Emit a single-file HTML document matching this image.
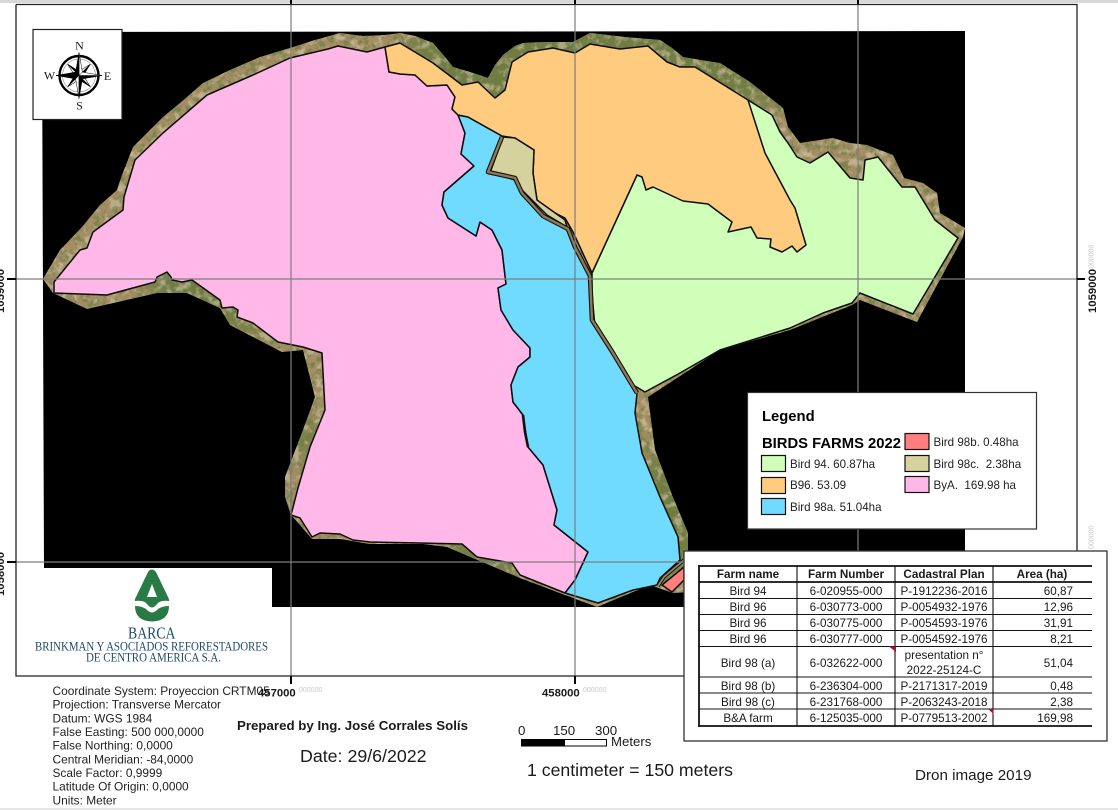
<!DOCTYPE html>
<html><head><meta charset="utf-8"><title>Birds Farms 2022</title>
<style>
html,body{margin:0;padding:0;background:#fff;width:1118px;height:810px;overflow:hidden}
svg{display:block}
text{font-family:"Liberation Sans",sans-serif;fill:#1a1a1a}
.s{font-family:"Liberation Serif",serif}
.t{font-size:11.7px;text-anchor:middle}
.r{font-size:11.7px;text-anchor:end}
.h{font-size:11.7px;font-weight:bold;text-anchor:middle}
.l{font-size:11.6px;fill:#222}
.c{font-size:11.9px;fill:#222}
.g{font-size:7px;fill:#c8c8c8}
.b{font-size:11.3px;font-weight:bold}
</style></head><body>
<svg width="1118" height="810" viewBox="0 0 1118 810" xmlns="http://www.w3.org/2000/svg">
<defs>
<clipPath id="land"><polygon points="43,279 60,250 82,227 100,205 117,190 122,175 133,147 145,135 163,117 180,103 203,83 230,70 260,57 290,48 315,40 340,33 363,36 385,35 400,33 415,36 433,43 445,57 453,67 470,72 488,78 495,65 503,55 515,46 523,43 545,42 573,42 590,33 625,37 660,40 672,48 683,57 700,60 720,63 750,82 783,108 788,127 800,143 833,138 850,143 867,145 893,155 904,178 923,183 937,193 940,213 965,228 963,237 917,322 860,300 852,305 790,330 720,350 677,378 648,397 655,450 672,495 688,533 688,552 690,592 673,593 650,585 597,607 520,578 447,547 423,544 370,544 340,539 312,539 300,525 291,515 285,497 285,477 303,430 315,397 303,350 282,352 230,325 220,308 187,293 157,293 87,309 53,293"/></clipPath>
<filter id="noise" x="0" y="0" width="100%" height="100%"><feTurbulence type="fractalNoise" baseFrequency="0.16" numOctaves="3" seed="4"/><feColorMatrix type="matrix" values="0 0 0 0 0.16  0 0 0 0 0.22  0 0 0 0 0.06  5 0 0 0 -2.3"/></filter>
<filter id="noise2" x="0" y="0" width="100%" height="100%"><feTurbulence type="fractalNoise" baseFrequency="0.12" numOctaves="3" seed="11"/><feColorMatrix type="matrix" values="0 0 0 0 0.80  0 0 0 0 0.66  0 0 0 0 0.50  0 4.500 0 0 -2.200"/></filter>
<filter id="bl" x="-30%" y="-30%" width="160%" height="160%"><feGaussianBlur stdDeviation="12"/></filter>
</defs>

<rect width="1118" height="810" fill="#fff"/>
<rect width="1118" height="3" fill="#d8d8d8"/>
<rect y="808" width="1118" height="2" fill="#e6e6e6"/>

<!-- black raster -->
<polygon points="42,32 965,31 965,607 272,607 272,568 44,568" fill="#000"/>

<!-- land -->
<g clip-path="url(#land)">
<rect x="40" y="30" width="930" height="580" fill="#a48d64"/>
<g filter="url(#bl)" fill="#6f7a42">
<rect x="410" y="15" width="370" height="90"/>
<rect x="150" y="260" width="130" height="70"/>
<ellipse cx="672" cy="510" rx="34" ry="70"/>
<rect x="450" y="530" width="120" height="50"/>
<rect x="295" y="420" width="30" height="40"/>
</g>
<rect x="40" y="30" width="930" height="580" filter="url(#noise)" opacity=".8"/>
<rect x="40" y="30" width="930" height="580" filter="url(#noise2)" opacity=".5"/>
</g>

<!-- parcels -->
<g stroke="#0d0d0d" stroke-width="1.500" stroke-linejoin="round">
<polygon fill="#CFFFB8" points="748,100 772,115 780,132 788,143 797,157 810,163 828,152 850,178 863,180 865,160 878,157 902,187 915,187 935,220 958,238 913,314 860,293 852,303 823,313 790,328 720,350 680,373 645,392 628,382 613,353 595,328 592,293 592,273 637,175 700,150"/>
<polygon fill="#FFB8E8" points="54,293 54,282 80,250 87,248 93,232 123,210 124,197 135,160 163,133 207,95 253,75 290,58 328,49 338,46 367,52 385,47 389,72 400,74 415,75 427,86 447,85 455,97 452,109 458,115 465,133 461,154 474,166 444,192 442,205 448,218 476,236 480,222 492,230 502,250 506,284 498,288 501,310 513,330 530,348 530,357 518,367 511,385 513,402 523,415 528,447 543,465 557,510 554,525 588,552 575,580 565,593 520,575 512,563 477,557 462,544 420,543 370,542 353,540 340,534 320,533 312,537 300,518 291,515 298,488 310,447 325,410 322,353 303,347 278,342 253,323 237,317 238,310 233,307 222,308 220,300 192,280 182,282 172,280 171,277 167,272 157,277 155,282 107,295"/>
<polygon fill="#70DBFF" points="458,115 468,117 502,136 488,172 515,180 522,195 543,217 568,230 575,247 590,278 593,320 613,353 637,393 635,413 642,453 660,497 678,537 680,560 660,578 657,585 633,590 598,603 565,593 575,580 588,552 554,525 557,510 543,465 528,447 523,415 513,402 511,385 518,367 530,357 530,348 513,330 501,310 498,288 506,284 502,250 492,230 480,222 476,236 448,218 442,205 444,192 474,166 461,154 465,133"/>
<polygon fill="#FFCC7F" points="385,47 400,43 433,63 462,85 478,82 495,98 505,90 512,62 528,52 553,48 575,53 590,44 620,49 648,46 667,62 680,67 695,67 748,100 765,153 790,200 795,208 806,245 797,252 792,246 782,252 770,247 771,239 757,238 751,227 728,232 732,222 708,204 683,201 653,187 646,190 642,177 637,175 592,273 573,232 565,218 543,207 537,200 533,173 534,150 515,138 502,136 468,117 458,115 452,109 455,97 447,85 427,86 415,75 400,74 389,72"/>
<polygon fill="#D6D29E" points="503,137 515,138 534,150 533,173 537,200 565,220 567,227 547,215 520,188 513,177 490,173"/>
<polygon fill="#FF7F7F" points="684,567 662,585 672,592 684,580"/>
</g>
<polyline fill="none" stroke="#111" stroke-width="4.600" stroke-linejoin="round" points="502,137 488,172 515,178 522,193 543,216 568,229 575,247 590,276 592,320 613,353 637,393"/>
<polyline fill="none" stroke="#8e7a56" stroke-width="2.400" stroke-linejoin="round" points="502,137 488,172 515,178 522,193 543,216 568,229 575,247 590,276 592,320 613,353 637,393"/>
<polyline fill="none" stroke="#111" stroke-width="3.600" points="684,560 664,577 658,586"/>
<polyline fill="none" stroke="#8e8a5c" stroke-width="1.800" points="684,560 664,577 658,586"/>
<polyline fill="none" stroke="#111" stroke-width="2.600" points="523,415 525,432 528,447"/>

<!-- grid + frame -->
<g stroke="#7d7d7d" stroke-width="1.200" fill="none">
<path d="M291 4V676M575 4V676M858 4V551M16 279H1077M16 562H684"/>
</g>
<path d="M16 4.500H1077V551M16 4.500V676H684" fill="none" stroke="#222" stroke-width="1.300"/>
<path d="M291 0V4M575 0V4M858 0V4M291 676V684M575 676V684M7 279H16M7 562H16M1077 279H1085" stroke="#000" stroke-width="2" fill="none"/>

<!-- coordinate block -->
<text class="c" x="52.500" y="695">Coordinate System: Proyeccion CRTM05</text>
<text class="c" x="52.500" y="708.700">Projection: Transverse Mercator</text>
<text class="c" x="52.500" y="722.300">Datum: WGS 1984</text>
<text class="c" x="52.500" y="736">False Easting: 500 000,0000</text>
<text class="c" x="52.500" y="749.700">False Northing: 0,0000</text>
<text class="c" x="52.500" y="763.300">Central Meridian: -84,0000</text>
<text class="c" x="52.500" y="777">Scale Factor: 0,9999</text>
<text class="c" x="52.500" y="790.700">Latitude Of Origin: 0,0000</text>
<text class="c" x="52.500" y="804.400">Units: Meter</text>

<!-- axis labels -->
<text class="b" x="258" y="696.500">457000</text>
<text class="g" x="299" y="692">000000</text>
<text class="b" x="542" y="696.500">458000</text>
<text class="g" x="583" y="692">000000</text>
<text class="b" transform="translate(4,313) rotate(-90)">1059000</text>
<text class="b" transform="translate(4,596) rotate(-90)">1058000</text>
<text class="b" transform="translate(1096,313) rotate(-90)">1059000</text>
<text class="g" transform="translate(1093.500,268) rotate(-90)">000000</text>
<text class="g" transform="translate(1093.500,549) rotate(-90)">000000</text>

<!-- compass -->
<rect x="33" y="29.500" width="89" height="90" fill="#fff" stroke="#222" stroke-width="1.200"/>
<g transform="translate(79,75.500)">
<circle r="19.500" fill="none" stroke="#000" stroke-width="2.400"/>
<circle r="16.500" fill="none" stroke="#666" stroke-width=".5"/>
<g stroke="#000" stroke-width=".5">
<g transform="rotate(45)"><polygon points="0,-16 3,-3 0,0" fill="#000"/><polygon points="0,-16 -3,-3 0,0" fill="#fff"/></g>
<g transform="rotate(135)"><polygon points="0,-16 3,-3 0,0" fill="#000"/><polygon points="0,-16 -3,-3 0,0" fill="#fff"/></g>
<g transform="rotate(225)"><polygon points="0,-16 3,-3 0,0" fill="#000"/><polygon points="0,-16 -3,-3 0,0" fill="#fff"/></g>
<g transform="rotate(315)"><polygon points="0,-16 3,-3 0,0" fill="#000"/><polygon points="0,-16 -3,-3 0,0" fill="#fff"/></g>
<g transform="rotate(0)"><polygon points="0,-23 3.400,-3.400 0,0" fill="#fff"/><polygon points="0,-23 -3.400,-3.400 0,0" fill="#000"/></g>
<g transform="rotate(90)"><polygon points="0,-23 3.400,-3.400 0,0" fill="#000"/><polygon points="0,-23 -3.400,-3.400 0,0" fill="#fff"/></g>
<g transform="rotate(180)"><polygon points="0,-23 3.400,-3.400 0,0" fill="#fff"/><polygon points="0,-23 -3.400,-3.400 0,0" fill="#000"/></g>
<g transform="rotate(270)"><polygon points="0,-23 3.400,-3.400 0,0" fill="#000"/><polygon points="0,-23 -3.400,-3.400 0,0" fill="#000"/></g>
</g>
</g>
<g style="font-size:12px;text-anchor:middle">
<text class="s" x="79.500" y="49.500">N</text>
<text class="s" x="79.500" y="109.500">S</text>
<text class="s" x="49.500" y="79.500">W</text>
<text class="s" x="107.500" y="80">E</text>
</g>

<!-- logo -->
<path d="M148 572Q151.500 567 156 572L168 597Q169.500 600 169 601Q160 600 157 604Q152 611 147 604Q144 600 135 601Q134.500 599 136 597Z" fill="#2a7a46"/>
<polygon points="152,584 147,597 157,597" fill="#fff"/>
<path d="M135 606Q143 606 147 610Q152 615 157 610Q161 606 169 606Q169 621 152 621.500Q135 621 135 606Z" fill="#2a7a46"/>
<text class="s" x="128" y="638.500" style="font-size:16.500px;fill:#1d4a6a" textLength="47.500" lengthAdjust="spacingAndGlyphs">BARCA</text>
<text class="s" x="35" y="650.500" style="font-size:12.200px;fill:#1d4a6a" textLength="233" lengthAdjust="spacingAndGlyphs">BRINKMAN Y ASOCIADOS REFORESTADORES</text>
<text class="s" x="86" y="661.500" style="font-size:12.200px;fill:#1d4a6a" textLength="135" lengthAdjust="spacingAndGlyphs">DE CENTRO AMERICA S.A.</text>

<text x="237" y="730" style="font-size:12.500px;font-weight:bold" textLength="231" lengthAdjust="spacingAndGlyphs">Prepared by Ing. José Corrales Solís</text>
<text x="300" y="762" style="font-size:17.800px">Date: 29/6/2022</text>

<!-- scale -->
<text x="518" y="735" style="font-size:13.300px">0</text>
<text x="553" y="735" style="font-size:13.300px">150</text>
<text x="595" y="735" style="font-size:13.300px">300</text>
<rect x="521.500" y="739.500" width="85" height="6.500" fill="#fff" stroke="#000" stroke-width="1"/>
<rect x="521" y="739" width="44" height="7.500" fill="#000"/>
<text x="611" y="746" style="font-size:13.200px">Meters</text>
<text x="527" y="776" style="font-size:17.700px">1 centimeter = 150 meters</text>
<text x="915" y="780" style="font-size:15.200px">Dron image 2019</text>

<!-- legend -->
<rect x="747.500" y="392.500" width="289" height="136.500" fill="#fff" stroke="#333" stroke-width="1.200"/>
<text x="762" y="421" style="font-size:14.800px;font-weight:bold;fill:#000">Legend</text>
<text x="762" y="448" style="font-size:14.800px;font-weight:bold;fill:#000">BIRDS FARMS 2022</text>
<g stroke="#111" stroke-width="1.200">
<rect x="761.500" y="455.500" width="24" height="16" fill="#CFFFB8"/>
<rect x="761.500" y="477.500" width="24" height="16" fill="#FFCC7F"/>
<rect x="761.500" y="498.500" width="24" height="16" fill="#70DBFF"/>
<rect x="905" y="433.500" width="24" height="16" fill="#FF7F7F"/>
<rect x="905" y="455.500" width="24" height="16" fill="#D6D29E"/>
<rect x="905" y="476.500" width="24" height="16" fill="#FFB8E8"/>
</g>
<text class="l" x="790" y="468">Bird 94. 60.87ha</text>
<text class="l" x="790" y="489">B96. 53.09</text>
<text class="l" x="790" y="511">Bird 98a. 51.04ha</text>
<text class="l" x="933.500" y="446">Bird 98b. 0.48ha</text>
<text class="l" x="933.500" y="468">Bird 98c.&#160;&#160;2.38ha</text>
<text class="l" x="933.500" y="489">ByA.&#160;&#160;169.98 ha</text>

<!-- table box -->
<rect x="684" y="551" width="423" height="190" fill="#fff" stroke="#333" stroke-width="1.300"/>
<g stroke="#111" fill="none">
<path d="M699 566H1092M699 582H1092M699 726H1092" stroke-width="1.800"/>
<path d="M699 598.500H1092M699 614.500H1092M699 630.500H1092M699 646.500H1092M699 677H1092M699 693H1092M699 709H1092" stroke-width="1"/>
<path d="M699 565V727" stroke-width="1.800"/>
<path d="M797 566V726M895 566V726M993 566V726" stroke-width="1.100"/>
</g>
<polygon points="889,646.500 896,646.500 896,652" fill="#b01030"/>
<polygon points="988,709 993.500,709 993.500,714" fill="#b01030"/>

<text class="h" x="748" y="578">Farm name</text><text class="h" x="846" y="578">Farm Number</text><text class="h" x="944" y="578">Cadastral Plan</text><text class="h" x="1042" y="578">Area (ha)</text>
<text class="t" x="748" y="595">Bird 94</text><text class="t" x="846" y="595">6-020955-000</text><text class="t" x="944" y="595">P-1912236-2016</text><text class="r" x="1073" y="595">60,87</text>
<text class="t" x="748" y="611">Bird 96</text><text class="t" x="846" y="611">6-030773-000</text><text class="t" x="944" y="611">P-0054932-1976</text><text class="r" x="1073" y="611">12,96</text>
<text class="t" x="748" y="627">Bird 96</text><text class="t" x="846" y="627">6-030775-000</text><text class="t" x="944" y="627">P-0054593-1976</text><text class="r" x="1073" y="627">31,91</text>
<text class="t" x="748" y="643">Bird 96</text><text class="t" x="846" y="643">6-030777-000</text><text class="t" x="944" y="643">P-0054592-1976</text><text class="r" x="1073" y="643">8,21</text>
<text class="t" x="748" y="667">Bird 98 (a)</text><text class="t" x="846" y="667">6-032622-000</text><text class="t" x="944" y="659">presentation n°</text><text class="t" x="944" y="674">2022-25124-C</text><text class="r" x="1073" y="667">51,04</text>
<text class="t" x="748" y="690">Bird 98 (b)</text><text class="t" x="846" y="690">6-236304-000</text><text class="t" x="944" y="690">P-2171317-2019</text><text class="r" x="1073" y="690">0,48</text>
<text class="t" x="748" y="706">Bird 98 (c)</text><text class="t" x="846" y="706">6-231768-000</text><text class="t" x="944" y="706">P-2063243-2018</text><text class="r" x="1073" y="706">2,38</text>
<text class="t" x="748" y="722">B&amp;A farm</text><text class="t" x="846" y="722">6-125035-000</text><text class="t" x="944" y="722">P-0779513-2002</text><text class="r" x="1073" y="722">169,98</text>
</svg>
</body></html>
